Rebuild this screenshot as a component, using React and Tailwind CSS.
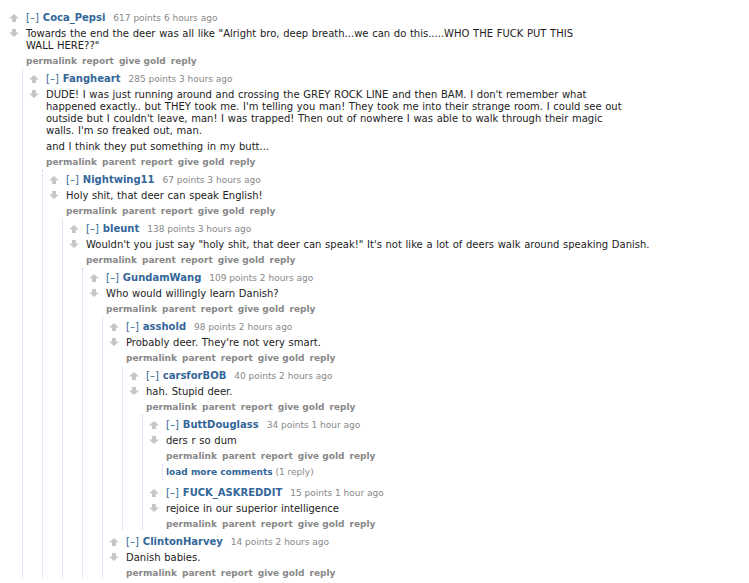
const thread = {
  author: 'Coca_Pepsi',
  score: '617 points 6 hours ago',
  body: ['Towards the end the deer was all like "Alright bro, deep breath...we can do this.....WHO THE FUCK PUT THIS\nWALL HERE??"'],
  top: true,
  replies: [
    {
      author: 'Fangheart',
      score: '285 points 3 hours ago',
      body: [
        "DUDE! I was just running around and crossing the GREY ROCK LINE and then BAM. I don't remember what\nhappened exactly.. but THEY took me. I'm telling you man! They took me into their strange room. I could see out\noutside but I couldn't leave, man! I was trapped! Then out of nowhere I was able to walk through their magic\nwalls. I'm so freaked out, man.",
        'and I think they put something in my butt...',
      ],
      replies: [
        {
          author: 'Nightwing11',
          score: '67 points 3 hours ago',
          body: ['Holy shit, that deer can speak English!'],
          replies: [
            {
              author: 'bleunt',
              score: '138 points 3 hours ago',
              body: ['Wouldn\'t you just say "holy shit, that deer can speak!" It\'s not like a lot of deers walk around speaking Danish.'],
              replies: [
                {
                  author: 'GundamWang',
                  score: '109 points 2 hours ago',
                  body: ['Who would willingly learn Danish?'],
                  replies: [
                    {
                      author: 'asshold',
                      score: '98 points 2 hours ago',
                      body: ["Probably deer. They're not very smart."],
                      replies: [
                        {
                          author: 'carsforBOB',
                          score: '40 points 2 hours ago',
                          body: ['hah. Stupid deer.'],
                          replies: [
                            {
                              author: 'ButtDouglass',
                              score: '34 points 1 hour ago',
                              body: ['ders r so dum'],
                              more: '(1 reply)',
                            },
                            {
                              author: 'FUCK_ASKREDDIT',
                              score: '15 points 1 hour ago',
                              body: ['rejoice in our superior intelligence'],
                            },
                          ],
                        },
                      ],
                    },
                    {
                      author: 'ClintonHarvey',
                      score: '14 points 2 hours ago',
                      body: ['Danish babies.'],
                    },
                  ],
                },
              ],
            },
          ],
        },
      ],
    },
  ],
};

const Arrow = ({ down }) => (
  <svg width="10" height="8" viewBox="0 0 10 8" className={down ? 'mt-[7px] rotate-180' : ''}>
    <path d="M5 0L10 4.5H7V8H3V4.5H0Z" fill="#c6c6c6" />
  </svg>
);

function Comment({ c }) {
  const buttons = c.top
    ? ['permalink', 'report', 'give gold', 'reply']
    : ['permalink', 'parent', 'report', 'give gold', 'reply'];

  return (
    <div className="pt-[2px] pb-[3px] last:pb-0">
      <div className="flex">
        <div className="ml-[2px] mr-[7px] flex w-[10px] shrink-0 flex-col items-center pt-[4px]">
          <Arrow />
          <Arrow down />
        </div>
        <div className="min-w-0">
          <p className="flex items-baseline gap-[4px] text-[10px] leading-[16px]">
            <a href="#" className="text-[#369]">[–]</a>
            <a href="#" className="font-bold text-[#369]">{c.author}</a>
            <span className="ml-[4px] text-[9px] text-[#888]">{c.score}</span>
          </p>
          <div className="mt-[2px] max-w-[660px] space-y-[4px] whitespace-pre-line text-[10px] leading-[12px] text-[#222] [word-spacing:0.5px]">
            {c.body.map((p, i) => (
              <p key={i}>{p}</p>
            ))}
          </div>
          <ul className="mt-[4px] flex gap-[5px] text-[9px] font-bold leading-[10px] text-[#888]">
            {buttons.map((b) => (
              <li key={b}>
                <a href="#">{b}</a>
              </li>
            ))}
          </ul>
        </div>
      </div>
      {c.replies && (
        <div className="ml-[15px] mt-[3px] border-l border-dotted border-[#ccccee] pl-[4px]">
          {c.replies.map((r) => (
            <Comment key={r.author} c={r} />
          ))}
        </div>
      )}
      {c.more && (
        <div className="ml-[15px] mt-[3px] border-l border-dotted border-[#ccccee] pl-[3px] text-[9px] leading-[16px]">
          <a href="#" className="font-bold text-[#369]">load more comments</a>{' '}
          <span className="text-[#888]">{c.more}</span>
        </div>
      )}
    </div>
  );
}

export default function App() {
  return (
    <div className="min-h-screen bg-white pl-[7px] pt-[8px] font-['DejaVu_Sans',Verdana,sans-serif]">
      <Comment c={thread} />
    </div>
  );
}
